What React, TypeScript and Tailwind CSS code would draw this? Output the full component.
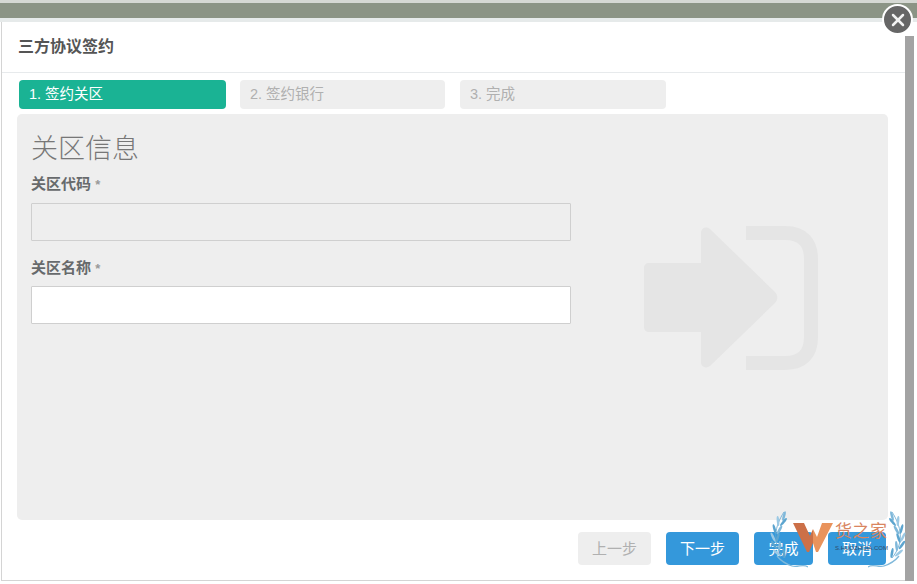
import { X } from "lucide-react";

const font = "font-['Liberation_Sans','Noto_Sans_CJK_SC',sans-serif]";

function Step({ label, active, width }: { label: string; active?: boolean; width: string }) {
  return (
    <div
      className={`h-[29px] ${width} rounded-[4px] pl-[10px] text-[14.5px] leading-[28px] ${
        active ? "bg-[#1ab394] text-white" : "bg-[#eeeeee] text-[#b0b0b0]"
      }`}
    >
      {label}
    </div>
  );
}

function Field({ label, disabled, gap }: { label: string; disabled?: boolean; gap: string }) {
  return (
    <div className="w-[540px]">
      <div className="h-[19px] text-[15px] leading-[19px] font-bold text-[#676a6c]">
        {label} <span className="text-[13px] text-[#999999]">*</span>
      </div>
      <div
        className={`${gap} h-[38px] rounded-[1px] border border-[#cfcfcf] ${disabled ? "bg-[#eeeeee]" : "bg-white"}`}
      />
    </div>
  );
}

function Button({ label, muted, width }: { label: string; muted?: boolean; width: string }) {
  return (
    <div
      className={`h-[33px] ${width} rounded-[4px] text-center text-[15px] leading-[33px] ${
        muted ? "bg-[#eeeeee] text-[#b0b0b0]" : "bg-[#3498db] text-white"
      }`}
    >
      {label}
    </div>
  );
}

const leaves = [
  { x: 24, y: 6, r: -15, c: "#7fb8da" },
  { x: 24.5, y: 12, r: -40, c: "#5da5cf" },
  { x: 30, y: 11, r: 5, c: "#9cc9e4" },
  { x: 28.5, y: 20, r: -30, c: "#7fb8da" },
  { x: 33.5, y: 19, r: 15, c: "#5da5cf" },
  { x: 30.5, y: 28, r: -20, c: "#5da5cf" },
  { x: 35, y: 27, r: 25, c: "#9cc9e4" },
  { x: 28.5, y: 36, r: -5, c: "#7fb8da" },
  { x: 34, y: 35, r: 35, c: "#5da5cf" },
  { x: 24, y: 43, r: 10, c: "#5da5cf" },
  { x: 31, y: 43, r: 50, c: "#9cc9e4" },
];

// laurel branch of the watermark, drawn for the right side and mirrored for the left
function Laurel({ className }: { className: string }) {
  return (
    <svg viewBox="0 0 38 62" className={className} fill="none">
      <path d="M24 2C33 16 37 32 24 48" stroke="#5da5cf" strokeWidth="0.8" />
      {leaves.map((l, i) => (
        <ellipse
          key={i}
          cx={l.x}
          cy={l.y}
          rx="1.3"
          ry="5"
          fill={l.c}
          transform={`rotate(${l.r} ${l.x} ${l.y})`}
        />
      ))}
      <path d="M0 57C5 53 10 58 16 56C22 54 27 51 31 46" stroke="#7fb8da" strokeWidth="1.3" />
    </svg>
  );
}

export default function App() {
  return (
    <div className={`${font} relative flex h-[584px] w-[917px] flex-col overflow-hidden bg-white`}>
      <div className="h-[3px] bg-[#d5d8d3]" />
      <div className="h-[15px] bg-[#8b9485]" />
      <div className="h-[4px] bg-[#e6eaea]" />

      <div className="flex min-h-0 flex-1 pr-[3px] pb-[3px]">
        <div className="ml-px flex min-w-0 flex-1 flex-col border-b border-l border-[#d4d4d4]">
          <div className="flex h-[51px] items-center border-b border-[#e7eaec] pl-[16px] text-[16px] font-bold text-[#555555]">
            三方协议签约
          </div>

          <div className="flex pl-[17px] pt-[7px]">
            <Step label="1. 签约关区" active width="w-[207px]" />
            <div className="ml-[14px]">
              <Step label="2. 签约银行" width="w-[205px]" />
            </div>
            <div className="ml-[15px]">
              <Step label="3. 完成" width="w-[206px]" />
            </div>
          </div>

          <div className="relative mt-[5px] ml-[15px] h-[406px] w-[871px] rounded-[5px] bg-[#eeeeee] pl-[14px] pt-[17px]">
            <h2 className="text-[27px] leading-[36px] font-light text-[#777777]">关区信息</h2>
            <div className="mt-[7px]">
              <Field label="关区代码" disabled gap="mt-[10px]" />
            </div>
            <div className="mt-[17px]">
              <Field label="关区名称" gap="mt-[9px]" />
            </div>
            <svg viewBox="0 0 176 146" className="absolute left-[626px] top-[111px] h-[146px] w-[176px]">
              <path
                d="M6 38H58V8C58 3 63 1 67 4L132 67C135 70 135 75 132 78L67 141C63 144 58 142 58 137V107H6C3 107 1 105 1 102V43C1 40 3 38 6 38Z"
                fill="#e5e5e5"
              />
              <path
                d="M103 8H142C160 8 168 18 168 34V112C168 128 160 138 142 138H103"
                fill="none"
                stroke="#e5e5e5"
                strokeWidth="14"
              />
            </svg>
          </div>

          <div className="flex gap-[15px] pl-[576px] pt-[12px]">
            <Button label="上一步" muted width="w-[73px]" />
            <Button label="下一步" width="w-[73px]" />
            <Button label="完成" width="w-[59px]" />
            <Button label="取消" width="w-[58px]" />
          </div>
        </div>
        <div className="mt-[14px] w-[9px] bg-[#a3a3a3]" />
      </div>

      <div className="absolute left-[882px] top-[4px] flex h-[31px] w-[31px] items-center justify-center rounded-full border-[2px] border-white bg-[#666666]">
        <X size={20} strokeWidth={3} color="#f2f2f2" />
      </div>

      <div className="pointer-events-none absolute left-[770px] top-[510px] h-[64px] w-[136px]">
        <Laurel className="absolute left-[98px] top-0 h-[62px] w-[38px]" />
        <Laurel className="absolute left-0 top-0 h-[62px] w-[38px] -scale-x-100" />
        <svg viewBox="0 0 40 30" className="absolute left-[23px] top-[13px] h-[30px] w-[40px]">
          <path d="M0 0H11L17 13L20 6V20L16 29H14Z" fill="#cc7048" />
          <path d="M20 6L24 14L29 0H40L25 29H23L20 20Z" fill="#e9935c" />
        </svg>
        <div className="absolute left-[65px] top-[13px] text-[17px] leading-[18px] tracking-[0.5px] text-[#d98560]">
          货之家
        </div>
        <div className="absolute left-[65px] top-[34px] text-[6px] leading-[8px] text-[#2c4a6a]">
          S.HUOZHIJIA.COM
        </div>
      </div>
    </div>
  );
}
